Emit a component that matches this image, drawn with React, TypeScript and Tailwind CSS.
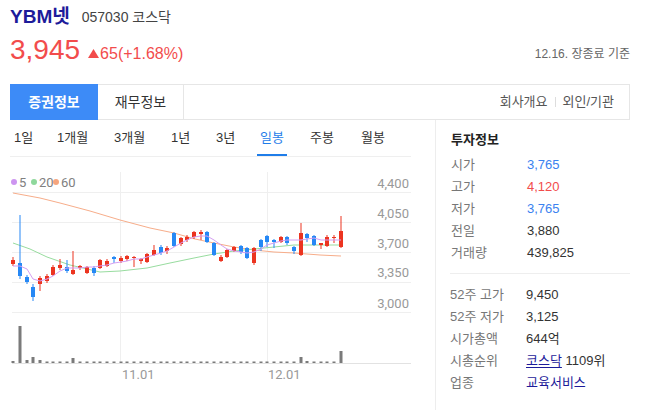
import React from "react";

// x, bodyTop, bodyBottom, wickTop, wickBottom, up
const candles: [number, number, number, number, number, number][] = [
  [13, 260, 264, 257, 266, 1],
  [20, 263, 276, 215, 279, 0],
  [27, 277, 282, 275, 284, 0],
  [33, 287, 297, 284, 301, 0],
  [40, 278, 284, 276, 291, 1],
  [47, 276, 281, 274, 283, 1],
  [53, 267, 275, 265, 276, 1],
  [60, 265, 268, 259, 270, 1],
  [67, 267, 271, 260, 273, 0],
  [73, 270, 274, 251, 275, 1],
  [80, 266, 268, 265, 270, 1],
  [87, 267, 273, 266, 274, 1],
  [94, 268, 273, 266, 276, 0],
  [100, 260, 268, 259, 269, 1],
  [107, 261, 266, 259, 267, 1],
  [114, 257, 259, 256, 263, 0],
  [121, 258, 261, 256, 263, 1],
  [127, 256, 259, 255, 261, 1],
  [134, 257, 258, 256, 267, 1],
  [141, 259, 261, 258, 264, 1],
  [147, 254, 262, 253, 263, 1],
  [154, 250, 255, 245, 256, 1],
  [161, 247, 253, 245, 255, 0],
  [167, 248, 251, 246, 254, 1],
  [174, 233, 246, 232, 247, 0],
  [181, 238, 244, 237, 246, 1],
  [187, 237, 240, 235, 242, 1],
  [194, 232, 237, 231, 239, 1],
  [201, 232, 234, 230, 240, 1],
  [207, 232, 242, 231, 243, 0],
  [214, 243, 255, 242, 256, 0],
  [221, 257, 261, 255, 262, 1],
  [227, 250, 257, 249, 258, 1],
  [234, 247, 251, 246, 252, 1],
  [241, 246, 252, 245, 254, 0],
  [247, 248, 258, 247, 259, 0],
  [254, 248, 263, 247, 265, 1],
  [261, 240, 247, 239, 251, 0],
  [267, 236, 242, 235, 247, 0],
  [274, 240, 242, 239, 248, 0],
  [281, 237, 242, 236, 243, 1],
  [287, 237, 243, 236, 245, 0],
  [294, 247, 251, 246, 254, 0],
  [301, 233, 255, 223, 256, 1],
  [307, 234, 238, 233, 242, 0],
  [314, 236, 245, 235, 246, 0],
  [321, 243, 245, 243, 249, 1],
  [327, 237, 246, 235, 247, 1],
  [334, 237, 238, 235, 243, 1],
  [341, 231, 247, 216, 248, 1],
];

const volumes: Record<number, number> = { 13: 2, 20: 37, 27: 3, 33: 6, 40: 3, 73: 5, 301: 6, 307: 2, 341: 12 };

const ma60 = "13,193 40,198 60,203 90,211 120,220 150,228 174,233 195,239 214,243 234,247 254,250 274,252 294,253 320,255 341,256";
const ma20 = "13,243 30,249 47,257 70,265 100,272 120,271 147,268 170,263 194,258 214,254 234,251 254,249 274,247 294,245 320,245 341,245";
const ma5 =
  "13,266 20,266 27,269 33,279 40,281 47,279 53,276 60,271 67,268 73,268 80,268 87,267 94,267 100,266 107,265 114,263 121,262 127,261 134,259 141,259 147,257 154,255 161,253 167,251 174,247 181,243 187,240 194,237 201,236 207,236 214,240 221,245 227,249 234,251 241,252 247,253 254,252 261,249 267,245 274,243 281,241 287,240 294,240 301,240 307,239 314,238 321,240 327,240 334,240 341,240";

const yLabels = [
  ["4,400", 187.5],
  ["4,050", 217.5],
  ["3,700", 247.5],
  ["3,350", 277],
  ["3,000", 307.5],
] as const;

function Chart() {
  return (
    <svg width="425" height="253" className="block">
      <g transform="translate(-10 -157)" fontFamily="Roboto, 'Liberation Sans', sans-serif" fontSize="13">
        {[192.5, 222.5, 252.5, 282.5, 312.5].map((y) => (
          <line key={y} x1="12" x2="411" y1={y} y2={y} stroke="#efefef" />
        ))}
        <line x1="120.5" x2="120.5" y1="172" y2="363" stroke="#efefef" />
        <line x1="267.5" x2="267.5" y1="172" y2="363" stroke="#efefef" />
        <line x1="12" x2="411" y1="363.5" y2="363.5" stroke="#e2e2e2" />

        <circle cx="14" cy="182" r="3" fill="#cd95f0" />
        <text x="19" y="186.6" fill="#808080">5</text>
        <circle cx="34" cy="182" r="3" fill="#8fd89c" />
        <text x="39" y="186.6" fill="#808080">20</text>
        <circle cx="56" cy="182" r="3" fill="#f6a57e" />
        <text x="61" y="186.6" fill="#808080">60</text>

        {yLabels.map(([t, y]) => (
          <text key={t} x="409" y={y} textAnchor="end" fill="#999999">
            {t}
          </text>
        ))}
        <text x="122" y="378.6" fill="#999999">11.01</text>
        <text x="268" y="378.6" fill="#999999">12.01</text>

        <polyline points={ma60} fill="none" stroke="#f7ad8a" strokeWidth="1" />
        <polyline points={ma20} fill="none" stroke="#98dc9f" strokeWidth="1" />

        {candles.map(([x, bt, bb, wt, wb, up]) => (
          <g key={x} fill={up ? "#ec3420" : "#2688f5"}>
            <rect x={x - 0.5} y={wt} width="1" height={wb - wt} />
            <rect x={x - 2} y={bt} width="4" height={Math.max(bb - bt, 1)} />
          </g>
        ))}
        <polyline points={ma5} fill="none" stroke="#d49ff2" strokeWidth="1" />

        {candles.map(([x]) => {
          const h = volumes[x] ?? 1.5;
          return <rect key={"v" + x} x={x - 1.5} y={363 - h} width="3" height={h} fill="#7a7a7a" />;
        })}
      </g>
    </svg>
  );
}

const periods = [
  ["1일", "w-[43px]"],
  ["1개월", "w-[57px]"],
  ["3개월", "w-[57px]"],
  ["1년", "w-[45px]"],
  ["3년", "w-[44px]"],
  ["일봉", "w-[50px]"],
  ["주봉", "w-[51px]"],
  ["월봉", "w-[40px]"],
];

function Row({ label, children }: { label: string; children: React.ReactNode }) {
  return (
    <div className="flex h-[22px] items-center">
      <span className="w-[76px] text-[#777]">{label}</span>
      <span className="text-[#333]">{children}</span>
    </div>
  );
}

export default function App() {
  return (
    <div className="h-[410px] w-[648px] overflow-hidden bg-white font-['Liberation_Sans','Noto_Sans_CJK_KR',sans-serif] text-[#333]">
      <header className="pl-[10px] pr-[18px] pt-[5px]">
        <div className="flex h-[24px] items-center gap-[12px]">
          <h1 className="text-[19px] font-bold leading-[24px] text-[#1d1b9a]">YBM넷</h1>
          <span className="pt-[1px] text-[14px] text-[#444]">057030 코스닥</span>
        </div>
        <div className="mt-[5px] flex h-[32px] items-center justify-between">
          <div className="flex items-baseline text-[#f24c4c]">
            <span className="text-[28px] leading-[32px]">3,945</span>
            <svg width="11" height="9" viewBox="0 0 11 9" className="ml-[8px] mr-[1px] self-center mt-[6px]">
              <path d="M5.5 0 L11 9 L0 9 Z" fill="#f24c4c" />
            </svg>
            <span className="text-[16px]">65(+1.68%)</span>
          </div>
          <span className="mt-[7px] text-[12px] text-[#666]">12.16. 장종료 기준</span>
        </div>
      </header>

      <nav className="ml-[10px] mr-[18px] mt-[18px] flex h-[36px] text-[14px]">
        <div className="flex w-[88px] items-center justify-center bg-[#3d8bf7] font-bold text-white">증권정보</div>
        <div className="flex w-[86px] items-center justify-center border-y border-r border-[#e6e6e6] text-[#333]">재무정보</div>
        <div className="flex flex-1 items-center justify-end gap-[7px] border-y border-r border-[#e6e6e6] pr-[15px] text-[13px] text-[#555]">
          <span>회사개요</span>
          <span className="h-[10px] w-px bg-[#dddddd]" />
          <span>외인/기관</span>
        </div>
      </nav>

      <div className="flex">
        <section className="ml-[10px] h-[290px] w-[426px] border-r border-[#ededed]">
          <ul className="flex h-[37px] w-[401px] border-b border-[#efefef] pl-[4px] text-[13px] text-[#333]">
            {periods.map(([p, w]) => (
              <li key={p} className={w}>
                <span
                  className={
                    p === "일봉"
                      ? "-ml-[3px] inline-flex h-full items-center border-b-2 border-[#1f7de9] px-[3px] pt-[2px] text-[#1f7de9]"
                      : "-ml-[3px] inline-flex h-full items-center px-[3px]"
                  }
                >
                  {p}
                </span>
              </li>
            ))}
          </ul>
          <Chart />
        </section>

        <aside className="w-[194px] pl-[15px] text-[13px]">
          <h2 className="mt-[10px] h-[20px] font-bold leading-[20px] text-[#222]">투자정보</h2>
          <div className="mt-[4px]">
            <Row label="시가"><span className="text-[#3b82f0]">3,765</span></Row>
            <Row label="고가"><span className="text-[#f24c4c]">4,120</span></Row>
            <Row label="저가"><span className="text-[#3b82f0]">3,765</span></Row>
            <Row label="전일">3,880</Row>
            <Row label="거래량">439,825</Row>
          </div>
          <div className="-ml-px mt-[9px] border-t border-[#eeeeee] pt-[10px]">
            <Row label="52주 고가">9,450</Row>
            <Row label="52주 저가">3,125</Row>
            <Row label="시가총액">644억</Row>
            <Row label="시총순위">
              <span className="text-[#1d1b9a] underline underline-offset-2">코스닥</span> 1109위
            </Row>
            <Row label="업종"><span className="text-[#1d1b9a]">교육서비스</span></Row>
          </div>
        </aside>
      </div>
    </div>
  );
}
